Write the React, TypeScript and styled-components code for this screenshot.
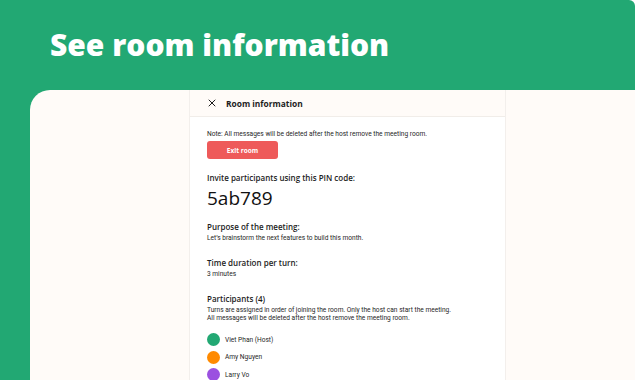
import styled, { createGlobalStyle } from 'styled-components'

const Global = createGlobalStyle`
  html, body { margin: 0; padding: 0; background: #ffffff; }
  body { font-family: Roboto, "Open Sans", sans-serif; }
`

/* ---------------- frame ---------------- */

const Frame = styled.div`
  width: 635px; height: 380px; overflow: hidden;
  background: #22a873;
  border-top-right-radius: 6px;
  display: flex; flex-direction: column;
`
const Title = styled.h1`
  margin: 0; padding: 24px 0 0 50px; height: 90px; box-sizing: border-box; flex: none;
  font-family: "Open Sans", sans-serif; font-weight: 800;
  font-size: 30px; line-height: 42px; color: #fff;
`
const Screen = styled.div`
  flex: 1; margin-left: 30px;
  background: #fffbf8;
  border-top-left-radius: 20px;
  display: flex;
  padding-left: 159px;
`

/* ---------------- panel ---------------- */

const Panel = styled.section`
  width: 317px;
  background: #fff;
  border-left: 1px solid #f3efec;
  border-right: 1px solid #f3efec;
  box-sizing: border-box;
  display: flex; flex-direction: column;
`
const Header = styled.header`
  height: 27px; box-sizing: border-box; flex: none;
  background: #fffbf8;
  border-bottom: 1px solid #f1ede9;
  display: flex; align-items: center; gap: 10px;
  padding: 0 18px;
  font-family: "Open Sans", sans-serif; font-weight: 700;
  font-size: 8.4px; color: #1d1d1d;
`
const Body = styled.div`
  padding: 13px 17px 0;
  display: flex; flex-direction: column;
`
const Small = styled.p<{ top?: number }>`
  margin: ${({ top }) => top ?? 0}px 0 0;
  font-size: 6.6px; line-height: 8px; color: #262626;
`
const ExitButton = styled.button`
  margin-top: 3px; width: 71px; height: 18px; flex: none;
  border: 0; border-radius: 3px;
  background: #ee5a5a; color: #fff;
  font-family: "Open Sans", sans-serif; font-weight: 700; font-size: 6.5px;
  padding: 0;
`
const Heading = styled.h3<{ top: number }>`
  margin: ${({ top }) => top}px 0 0;
  font-family: "Open Sans", sans-serif; font-weight: 600;
  font-size: 8px; line-height: 12px; color: #1d1d1d;
`
const Pin = styled.div`
  margin-top: 2px;
  font-family: "Open Sans", sans-serif; font-weight: 400;
  font-size: 19px; line-height: 24px; color: #111;
`
const People = styled.ul`
  list-style: none; margin: 11px 0 0; padding: 0;
  display: flex; flex-direction: column; gap: 4.5px;
`
const Person = styled.li`
  display: flex; align-items: center; gap: 5px;
  font-size: 6.6px; color: #262626; height: 13px;
`
const Dot = styled.span<{ color: string }>`
  width: 13px; height: 13px; border-radius: 50%;
  background: ${({ color }) => color};
  flex: none;
`

function CloseIcon() {
  return (
    <svg width="8" height="8" viewBox="0 0 8 8" fill="none" stroke="#1d1d1d" strokeWidth="1" strokeLinecap="round">
      <path d="M1 1L7 7M7 1L1 7" />
    </svg>
  )
}

const participants = [
  { name: 'Viet Phan (Host)', color: '#22a873' },
  { name: 'Amy Nguyen', color: '#ff8a00' },
  { name: 'Larry Vo', color: '#9b51e0' },
]

export default function App() {
  return (
    <>
      <Global />
      <Frame>
        <Title>See room information</Title>
        <Screen>
          <Panel>
            <Header>
              <CloseIcon />
              <span>Room information</span>
            </Header>
            <Body>
              <Small>Note: All messages will be deleted after the host remove the meeting room.</Small>
              <ExitButton>Exit room</ExitButton>

              <Heading top={13}>Invite participants using this PIN code:</Heading>
              <Pin>5ab789</Pin>

              <Heading top={11}>Purpose of the meeting:</Heading>
              <Small top={1}>Let’s brainstorm the next features to build this month.</Small>

              <Heading top={15}>Time duration per turn:</Heading>
              <Small top={1}>3 minutes</Small>

              <Heading top={15}>Participants (4)</Heading>
              <Small top={1}>
                Turns are assigned in order of joining the room. Only the host can start the meeting.
                <br />
                All messages will be deleted after the host remove the meeting room.
              </Small>
              <People>
                {participants.map(p => (
                  <Person key={p.name}>
                    <Dot color={p.color} />
                    {p.name}
                  </Person>
                ))}
              </People>
            </Body>
          </Panel>
        </Screen>
      </Frame>
    </>
  )
}
